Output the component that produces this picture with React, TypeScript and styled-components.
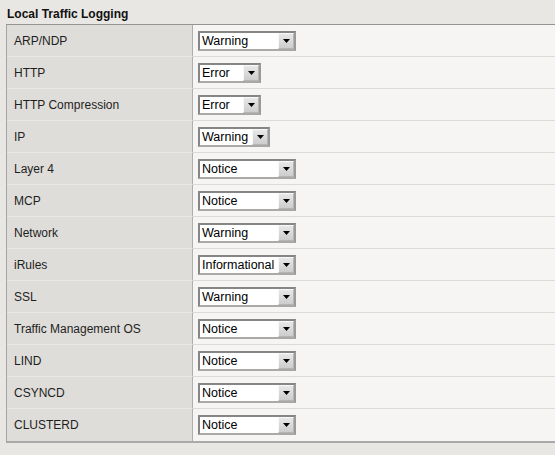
import React from 'react';
import styled, { createGlobalStyle } from 'styled-components';

const GlobalStyle = createGlobalStyle`
  html, body {
    margin: 0;
    padding: 0;
    background: #e9e7e3;
    font-family: Arial, "Liberation Sans", sans-serif;
    overflow: hidden;
  }
`;

const Page = styled.div`
  width: 555px;
  height: 455px;
  padding-left: 6px;
  box-sizing: border-box;
`;

const Title = styled.div`
  height: 24px;
  padding-left: 1px;
  font-size: 12px;
  font-weight: bold;
  line-height: 29px;
  color: #111;
  box-sizing: border-box;
  overflow: hidden;
`;

const Table = styled.div`
  border-top: 1px solid #949494;
  border-left: 1px solid #a3a3a3;
  border-bottom: 2px solid #a9a9a9;
  margin-right: -10px;
`;

const Row = styled.div`
  display: grid;
  grid-template-columns: 186px 1fr;
  height: 32px;
  &:not(:last-child) > * {
    border-bottom: 1px solid #e9e8e5;
  }
  &:not(:last-child) > *:last-child {
    border-bottom-color: #dcdbd8;
  }
`;

const Label = styled.div`
  display: flex;
  align-items: center;
  padding-left: 7px;
  background: #dfddd9;
  border-right: 1px solid #aeaeae;
  font-size: 12px;
  color: #1e1e1e;
`;

const Cell = styled.div`
  display: flex;
  align-items: center;
  padding-left: 5px;
  background: #f6f5f3;
`;

const SelectBox = styled.div<{ $width: number }>`
  display: flex;
  align-items: center;
  width: ${(p) => p.$width}px;
  height: 20px;
  box-sizing: border-box;
  background: #fff;
  border: 2px solid #868686;
  border-bottom-color: #a8a8a8;
  border-right-color: #9a9a9a;
`;

const SelectText = styled.span`
  flex: 1;
  padding-left: 2px;
  font-size: 12.5px;
  color: #000;
  white-space: nowrap;
  overflow: hidden;
`;

const DropButton = styled.span`
  display: flex;
  align-items: center;
  justify-content: center;
  width: 16px;
  height: 16px;
  box-sizing: border-box;
  background: linear-gradient(#e8e8e8, #cdcdcd);
  border: 1px solid #f8f8f8;
  border-right-color: #b5b5b5;
  border-bottom-color: #b5b5b5;
`;

const Arrow = () => (
  <svg width="7" height="4" viewBox="0 0 7 4">
    <path d="M0 0h7L3.5 4z" fill="#000" />
  </svg>
);

const Select = ({ value, width }: { value: string; width: number }) => (
  <SelectBox $width={width}>
    <SelectText>{value}</SelectText>
    <DropButton>
      <Arrow />
    </DropButton>
  </SelectBox>
);

const rows: { name: string; level: string; width: number }[] = [
  { name: 'ARP/NDP', level: 'Warning', width: 98 },
  { name: 'HTTP', level: 'Error', width: 63 },
  { name: 'HTTP Compression', level: 'Error', width: 63 },
  { name: 'IP', level: 'Warning', width: 72 },
  { name: 'Layer 4', level: 'Notice', width: 98 },
  { name: 'MCP', level: 'Notice', width: 98 },
  { name: 'Network', level: 'Warning', width: 98 },
  { name: 'iRules', level: 'Informational', width: 98 },
  { name: 'SSL', level: 'Warning', width: 98 },
  { name: 'Traffic Management OS', level: 'Notice', width: 98 },
  { name: 'LIND', level: 'Notice', width: 98 },
  { name: 'CSYNCD', level: 'Notice', width: 98 },
  { name: 'CLUSTERD', level: 'Notice', width: 98 },
];

const App: React.FC = () => (
  <>
    <GlobalStyle />
    <Page>
      <Title>Local Traffic Logging</Title>
      <Table>
        {rows.map((r) => (
          <Row key={r.name}>
            <Label>{r.name}</Label>
            <Cell>
              <Select value={r.level} width={r.width} />
            </Cell>
          </Row>
        ))}
      </Table>
    </Page>
  </>
);

export default App;
